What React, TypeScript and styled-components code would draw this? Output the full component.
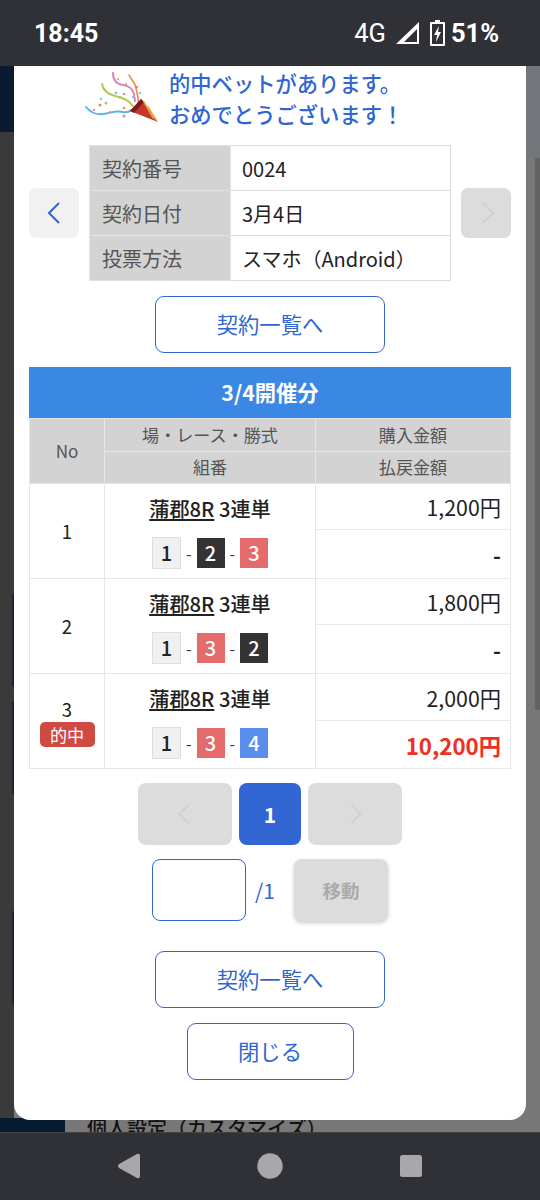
import React from "react";
import styled, { createGlobalStyle } from "styled-components";

const Global = createGlobalStyle`
  html, body { margin: 0; padding: 0; background: #303136; }
  * { box-sizing: border-box; }
  body { font-family: "Noto Sans CJK JP", "Noto Sans", sans-serif; }
`;

const blue = "#2f66d0";

const Screen = styled.div`
  width: 540px;
  height: 1200px;
  display: flex;
  flex-direction: column;
  overflow: hidden;
`;

const StatusBar = styled.header`
  height: 66px;
  flex: none;
  background: #303136;
  color: #fff;
  display: flex;
  align-items: center;
  justify-content: space-between;
  padding: 0 41px 0 34px;
  font-family: Roboto, sans-serif;
`;

const Time = styled.span`
  font-size: 25px;
  font-weight: 700;
  letter-spacing: 0;
`;

const StatusRight = styled.div`
  display: flex;
  align-items: center;
`;

const Network = styled.span`
  font-size: 25.5px;
  font-weight: 400;
  margin-right: 9px;
`;

const Percent = styled.span`
  font-size: 25.5px;
  font-weight: 700;
  margin-left: 6px;
`;

const Stage = styled.main`
  position: relative;
  flex: 1;
  background: linear-gradient(90deg, #3a3a3a 0, #3a3a3a 14px, #787878 14px);
  overflow: hidden;
`;

const NavyCorner = styled.div`
  position: absolute;
  left: 0;
  top: 0;
  width: 14px;
  height: 66px;
  background: #0a1a33;
`;

const GreyCorner = styled.div`
  position: absolute;
  right: 0;
  top: 0;
  width: 14px;
  height: 92px;
  background: #72757a;
`;

const RightStrip = styled.div`
  position: absolute;
  right: 0;
  top: 92px;
  width: 5px;
  height: 552px;
  background: #636363;
`;

const Sliver = styled.div<{ $top: number }>`
  position: absolute;
  left: 12px;
  top: ${(p) => p.$top}px;
  width: 4px;
  height: 95px;
  border-radius: 4px 0 0 4px;
  background: #1c2433;
`;

const FooterNavy = styled.div`
  position: absolute;
  left: 0;
  bottom: 0;
  width: 65px;
  height: 14px;
  background: #071a33;
`;

const BehindText = styled.div`
  position: absolute;
  left: 87px;
  top: 1048px;
  font-size: 20px;
  font-weight: 500;
  line-height: 28px;
  white-space: nowrap;
  color: #111;
`;

const Modal = styled.section`
  position: absolute;
  left: 14px;
  top: 0;
  width: 512px;
  height: 1054px;
  background: #fff;
  border-radius: 0 0 16px 16px;
  padding: 0 15px;
  display: flex;
  flex-direction: column;
  align-items: center;
`;

const Congrats = styled.div`
  display: flex;
  align-items: center;
  gap: 8px;
  height: 64px;
  width: 100%;
  padding-left: 56px;
  margin-bottom: 15px;
`;

const CongratsText = styled.p`
  margin: 0;
  color: ${blue};
  font-size: 21.3px;
  font-weight: 500;
  line-height: 31px;
  padding-bottom: 1px;
  white-space: nowrap;
`;

const ContractRow = styled.div`
  width: 100%;
  display: flex;
  align-items: center;
  justify-content: space-between;
`;

const ArrowButton = styled.button<{ $disabled?: boolean }>`
  width: 50px;
  height: 50px;
  padding: 0 0 0 1px;
  border: 0;
  border-radius: 7px;
  background: ${(p) => (p.$disabled ? "#dcdcdc" : "#f1f1f1")};
  color: ${(p) => (p.$disabled ? "#d0d0d0" : blue)};
  display: flex;
  align-items: center;
  justify-content: center;
`;

const InfoTable = styled.table`
  width: 362px;
  height: 136px;
  table-layout: fixed;
  border-collapse: collapse;
  font-size: 20px;
`;

const InfoLabel = styled.th`
  width: 141px;
  height: 45px;
  padding: 0 0 0 12px;
  background: #d3d3d3;
  border: 1px solid #e2e2e2;
  color: #555;
  font-weight: 400;
  text-align: left;
`;

const InfoValue = styled.td`
  padding: 0 0 0 11px;
  border: 1px solid #dcdcdc;
  color: #222;
`;

const OutlineButton = styled.button<{ $width: number; $top: number }>`
  width: ${(p) => p.$width}px;
  height: 57px;
  margin-top: ${(p) => p.$top}px;
  padding: 0 0 2px;
  flex: none;
  background: #fff;
  border: 1px solid ${blue};
  border-radius: 9px;
  color: ${blue};
  font-family: inherit;
  font-size: 21.3px;
  font-weight: 400;
`;

const Title = styled.h2`
  width: 100%;
  height: 51px;
  margin: 14px 0 0;
  flex: none;
  background: #3b87e4;
  color: #fff;
  font-size: 21.3px;
  font-weight: 700;
  line-height: 50px;
  text-align: center;
`;

const BetTable = styled.table`
  width: 482px;
  table-layout: fixed;
  border-collapse: collapse;
  flex: none;
`;

const Head = styled.th<{ $w?: number; $h: number }>`
  width: ${(p) => (p.$w ? `${p.$w}px` : "auto")};
  height: ${(p) => p.$h}px;
  padding: 0 0 2px;
  background: #d3d3d3;
  border: 1px solid #e6e6e6;
  color: #555;
  font-size: 17.1px;
  font-weight: 400;
  text-align: center;
`;

const NoCell = styled.td`
  padding: 0;
  border: 1px solid #e6e6e6;
  color: #222;
  font-size: 18.5px;
  line-height: 24px;
  text-align: center;
`;

const Badge = styled.div`
  width: 55px;
  height: 25px;
  margin: 1px auto -1px;
  background: #d04a44;
  border-radius: 5px;
  color: #fff;
  font-size: 17.1px;
  line-height: 25px;
`;

const RaceCell = styled.td`
  padding: 1px 0 0;
  border: 1px solid #e6e6e6;
  text-align: center;
  color: #222;
`;

const RaceName = styled.div`
  font-size: 20.2px;
  font-weight: 500;
  line-height: 28px;
`;

const RaceLink = styled.span`
  text-decoration: underline;
  text-underline-offset: 2px;
`;

const Combo = styled.div`
  margin-top: 14px;
  display: flex;
  align-items: center;
  justify-content: center;
  gap: 5px;
  color: #333;
  font-size: 16px;
`;

const colors: Record<number, { bg: string; fg: string }> = {
  1: { bg: "#f0f0f0", fg: "#222" },
  2: { bg: "#333333", fg: "#fff" },
  3: { bg: "#e36b6b", fg: "#fff" },
  4: { bg: "#5a8eee", fg: "#fff" },
};

const Lane = styled.span<{ $n: number }>`
  width: ${(p) => (p.$n === 1 ? 29 : 28)}px;
  height: ${(p) => (p.$n === 1 ? 32 : 30)}px;
  display: flex;
  align-items: center;
  justify-content: center;
  background: ${(p) => colors[p.$n].bg};
  border: ${(p) => (p.$n === 1 ? "1px solid #dedede" : "0")};
  color: ${(p) => colors[p.$n].fg};
  font-size: 20px;
  font-weight: 500;
`;

const Amount = styled.td<{ $h: number; $hit?: boolean; $dash?: boolean }>`
  height: ${(p) => p.$h}px;
  padding: 0 9px 0 0;
  border: 1px solid #e9e9e9;
  color: ${(p) => (p.$hit ? "#ee2f22" : "#222")};
  font-size: ${(p) => (p.$hit ? 22.3 : 21.3)}px;
  font-weight: ${(p) => (p.$hit || p.$dash ? 700 : 400)};
  text-align: right;
`;

const Pager = styled.nav`
  margin-top: 14px;
  display: flex;
  gap: 7px;
`;

const PageBtn = styled.button<{ $active?: boolean }>`
  width: ${(p) => (p.$active ? 62 : 94)}px;
  height: 62px;
  padding: 0;
  border: 0;
  border-radius: 8px;
  background: ${(p) => (p.$active ? "#3166d3" : "#dcdcdc")};
  color: ${(p) => (p.$active ? "#fff" : "#d0d0d0")};
  font-family: inherit;
  font-size: 21px;
  font-weight: 700;
  display: flex;
  align-items: center;
  justify-content: center;
`;

const MoveRow = styled.div`
  margin-top: 14px;
  display: flex;
  align-items: center;
`;

const PageInput = styled.input`
  width: 94px;
  height: 62px;
  border: 1px solid ${blue};
  border-radius: 8px;
  background: #fff;
  outline: none;
`;

const PageTotal = styled.span`
  width: 48px;
  padding-left: 9px;
  color: ${blue};
  font-size: 21px;
`;

const MoveBtn = styled.button`
  width: 94px;
  height: 62px;
  border: 0;
  border-radius: 8px;
  background: #dcdcdc;
  box-shadow: 0 2px 4px rgba(0, 0, 0, 0.2);
  color: #aaa;
  font-family: inherit;
  font-size: 18.5px;
  font-weight: 700;
`;

const NavBar = styled.footer`
  height: 68px;
  flex: none;
  background: #303136;
  border-top: 1px solid #45413f;
  display: flex;
  justify-content: center;
  align-items: center;
`;

const NavIcons = styled.svg`
  width: 540px;
  height: 67px;
  display: block;
`;

const Chevron = ({ dir, size = 26 }: { dir: "l" | "r"; size?: number }) => (
  <svg width={size} height={size} viewBox="0 0 26 26" fill="none" stroke="currentColor" strokeWidth="2">
    <path d={dir === "l" ? "M17 3 L7 13 L17 23" : "M9 3 L19 13 L9 23"} />
  </svg>
);

const Popper = () => (
  <svg width="76" height="54" viewBox="0 0 76 54" fill="none" strokeLinecap="round">
    <path d="M1 36c4 5 10 8 17 7 8-1 13-4 20-2 4 1 6 0 8-2" stroke="#5ab4ea" strokeWidth="2" />
    <path d="M17 13c1 7 6 10 13 12 8 2 14 4 18 10" stroke="#aecb5a" strokeWidth="2" />
    <path d="M28 2c0 7 3 11 10 12 6 1 10 4 11 9 0 3 1 5 1 7" stroke="#dc86bb" strokeWidth="2" />
    <path d="M44 4c2 4 6 8 7 13 1 6 3 10 2 16" stroke="#e68a44" strokeWidth="1.6" />
    <path d="M45 40 L56 28 L73 51 Z" fill="#c5372c" />
    <path d="M45 40 L56 28 L59 31 L49 42 Z" fill="#7c1b1f" />
    <path d="M59 31 L68 47 M63 36 L71 49" stroke="#eaa13a" strokeWidth="1.5" />
    <g>
      <circle cx="9" cy="39" r="1.2" fill="#e587b0" />
      <circle cx="15" cy="34" r="1.5" fill="#ef8a4a" />
      <circle cx="21" cy="32" r="1.5" fill="#a8c85a" />
      <circle cx="16" cy="28" r="1.2" fill="#7cc4ee" />
      <circle cx="25" cy="41" r="1" fill="#e587b0" />
      <circle cx="39" cy="37" r="1.3" fill="#ef8a4a" />
      <circle cx="35" cy="26" r="1.2" fill="#a8c85a" />
      <circle cx="39" cy="23" r="1.3" fill="#e587b0" />
      <circle cx="31" cy="22" r="1.3" fill="#7cc4ee" />
      <circle cx="41" cy="13" r="1.2" fill="#a8c85a" />
      <circle cx="33" cy="8" r="1" fill="#ef8a4a" />
      <circle cx="52" cy="16" r="1.2" fill="#ef8a4a" />
      <circle cx="55" cy="22" r="1.2" fill="#7cc4ee" />
      <circle cx="48" cy="26" r="1.2" fill="#7cc4ee" />
      <circle cx="39" cy="45" r="1.5" fill="#dc86bb" />
    </g>
  </svg>
);

const bets = [
  { no: 1, combo: [1, 2, 3], buy: "1,200円", pay: "-", h: [46, 49] },
  { no: 2, combo: [1, 3, 2], buy: "1,800円", pay: "-", h: [46, 49] },
  { no: 3, combo: [1, 3, 4], buy: "2,000円", pay: "10,200円", hit: true, h: [47, 48] },
];

export default function App() {
  return (
    <Screen>
      <Global />
      <StatusBar>
        <Time>18:45</Time>
        <StatusRight>
          <Network>4G</Network>
          <svg width="25" height="24" viewBox="0 0 25 24">
            <path d="M1 23 L24 1 V23 Z M9 21 H22 V8 Z" fill="#fff" fillRule="evenodd" />
          </svg>
          <svg width="15" height="26" viewBox="0 0 15 26" style={{ marginLeft: 10 }}>
            <path
              fillRule="evenodd"
              fill="#fff"
              d="M5 0h5v2h4a1 1 0 0 1 1 1v22a1 1 0 0 1-1 1H1a1 1 0 0 1-1-1V3a1 1 0 0 1 1-1h4z M2 4v20h11V4z"
            />
            <path fill="#fff" d="M9 6 L4 15 H7 L6 22 L11 12 H8 Z" />
          </svg>
          <Percent>51%</Percent>
        </StatusRight>
      </StatusBar>

      <Stage>
        <NavyCorner />
        <GreyCorner />
        <RightStrip />
        <Sliver $top={527} />
        <Sliver $top={634} />
        <Sliver $top={844} />
        <FooterNavy />
        <BehindText>個人設定（カスタマイズ）</BehindText>

        <Modal>
          <Congrats>
            <Popper />
            <CongratsText>
              的中ベットがあります。
              <br />
              おめでとうございます！
            </CongratsText>
          </Congrats>

          <ContractRow>
            <ArrowButton>
              <Chevron dir="l" />
            </ArrowButton>
            <InfoTable>
              <tbody>
                <tr>
                  <InfoLabel>契約番号</InfoLabel>
                  <InfoValue>0024</InfoValue>
                </tr>
                <tr>
                  <InfoLabel>契約日付</InfoLabel>
                  <InfoValue>3月4日</InfoValue>
                </tr>
                <tr>
                  <InfoLabel>投票方法</InfoLabel>
                  <InfoValue>スマホ（Android）</InfoValue>
                </tr>
              </tbody>
            </InfoTable>
            <ArrowButton $disabled>
              <Chevron dir="r" />
            </ArrowButton>
          </ContractRow>

          <OutlineButton $width={230} $top={15}>契約一覧へ</OutlineButton>

          <Title>3/4開催分</Title>
          <BetTable>
            <thead>
              <tr>
                <Head $w={75} $h={33} rowSpan={2}>No</Head>
                <Head $w={211} $h={33}>場・レース・勝式</Head>
                <Head $h={33}>購入金額</Head>
              </tr>
              <tr>
                <Head $h={32}>組番</Head>
                <Head $h={32}>払戻金額</Head>
              </tr>
            </thead>
            <tbody>
              {bets.map((b) => (
                <React.Fragment key={b.no}>
                  <tr>
                    <NoCell rowSpan={2}>
                      {b.no}
                      {b.hit && <Badge>的中</Badge>}
                    </NoCell>
                    <RaceCell rowSpan={2}>
                      <RaceName>
                        <RaceLink>蒲郡8R</RaceLink> 3連単
                      </RaceName>
                      <Combo>
                        {b.combo.map((n, i) => (
                          <React.Fragment key={i}>
                            {i > 0 && <span>-</span>}
                            <Lane $n={n}>{n}</Lane>
                          </React.Fragment>
                        ))}
                      </Combo>
                    </RaceCell>
                    <Amount $h={b.h[0]}>{b.buy}</Amount>
                  </tr>
                  <tr>
                    <Amount $h={b.h[1]} $hit={b.hit} $dash={!b.hit}>{b.pay}</Amount>
                  </tr>
                </React.Fragment>
              ))}
            </tbody>
          </BetTable>

          <Pager>
            <PageBtn>
              <Chevron dir="l" size={24} />
            </PageBtn>
            <PageBtn $active>1</PageBtn>
            <PageBtn>
              <Chevron dir="r" size={24} />
            </PageBtn>
          </Pager>

          <MoveRow>
            <PageInput aria-label="page" />
            <PageTotal>/1</PageTotal>
            <MoveBtn>移動</MoveBtn>
          </MoveRow>

          <OutlineButton $width={230} $top={30}>契約一覧へ</OutlineButton>
          <OutlineButton $width={167} $top={15}>閉じる</OutlineButton>
        </Modal>
      </Stage>

      <NavBar>
        <NavIcons viewBox="0 0 540 67">
          <path
            d="M119 31 L137 21 Q140 20 140 23 V43 Q140 46 137 45 L119 35 Q117 33 119 31 Z"
            fill="#a8a8aa"
          />
          <circle cx="270" cy="33" r="12.7" fill="#a8a8aa" />
          <rect x="400" y="22" width="22" height="22" rx="2.5" fill="#a8a8aa" />
        </NavIcons>
      </NavBar>
    </Screen>
  );
}
